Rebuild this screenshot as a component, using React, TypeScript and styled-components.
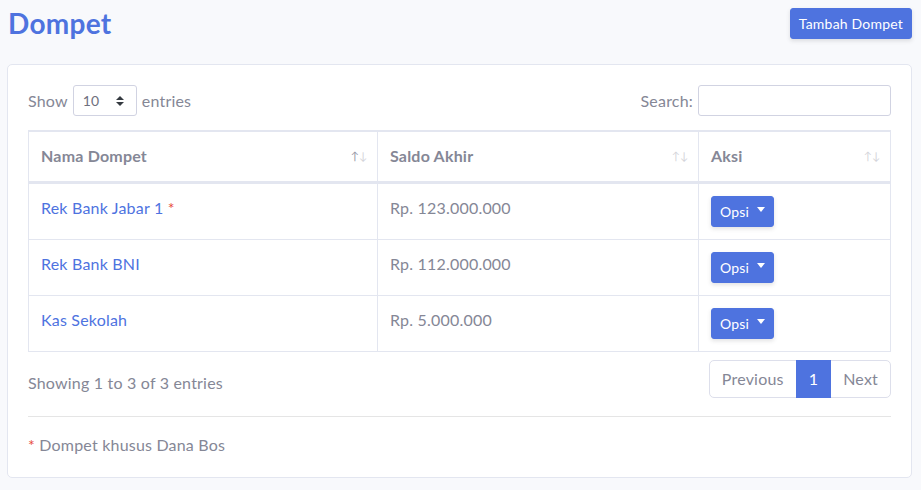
import React from "react";
import styled, { createGlobalStyle } from "styled-components";

const GlobalStyle = createGlobalStyle`
  html, body { margin: 0; padding: 0; background: #f8f9fc; }
  body {
    font-family: Lato, "Noto Sans", "Liberation Sans", sans-serif;
    font-size: 16px;
    line-height: 1.5;
    letter-spacing: 0.2px;
    color: #858796;
  }
  * { box-sizing: border-box; }
`;

const Page = styled.div`
  padding: 6px 9px 12px 7px;
`;

const HeadingRow = styled.div`
  display: flex;
  align-items: center;
  justify-content: space-between;
  margin-bottom: 24px;
  padding-left: 1px;
`;

const Title = styled.h1`
  margin: 0;
  font-size: 28px;
  line-height: 34px;
  font-weight: 700;
  letter-spacing: 0.3px;
  color: #4e73df;
`;

const PrimaryButton = styled.button`
  display: inline-flex;
  align-items: center;
  font-family: inherit;
  font-size: 14px;
  line-height: 21px;
  letter-spacing: 0.2px;
  padding: 4px 8px;
  color: #fff;
  background: #4e73df;
  border: 1px solid #4e73df;
  border-radius: 3px;
  box-shadow: 0 2px 4px rgba(58, 59, 69, 0.15);
  cursor: pointer;
`;

const Caret = styled.span`
  display: inline-block;
  margin-left: 8px;
  width: 0;
  height: 0;
  border-top: 5px solid #fff;
  border-left: 4px solid transparent;
  border-right: 4px solid transparent;
  transform: translateY(-2px);
`;

const Card = styled.div`
  background: #fff;
  border: 1px solid #e3e6f0;
  border-radius: 5px;
  padding: 20px;
`;

const Toolbar = styled.div`
  display: flex;
  justify-content: space-between;
  align-items: center;
  height: 31px;
  margin-bottom: 14px;
`;

const Label = styled.label`
  display: flex;
  align-items: center;
  gap: 5px;
  white-space: nowrap;
`;

const SelectBox = styled.div`
  position: relative;
  width: 64px;
  height: 31px;
  border: 1px solid #d1d3e2;
  border-radius: 3px;
  font-size: 14px;
  line-height: 29px;
  padding-left: 9px;
  color: #6e707e;
`;

const SelectArrow = styled.svg`
  position: absolute;
  right: 12px;
  top: 10px;
`;

const SearchInput = styled.input`
  width: 193px;
  height: 31px;
  border: 1px solid #d1d3e2;
  border-radius: 3px;
  font-family: inherit;
  font-size: 14px;
  padding: 4px 8px;
`;

const Table = styled.table`
  width: 863px;
  table-layout: fixed;
  border-collapse: separate;
  border-spacing: 0;
  border: 1px solid #e3e6f0;
`;

const Th = styled.th<{ $w: number; $last?: boolean }>`
  position: relative;
  width: ${(p) => p.$w}px;
  text-align: left;
  font-weight: 700;
  padding: 12px 30px 13px 12px;
  line-height: 24px;
  border-top: 1px solid #e3e6f0;
  border-bottom: 2px solid #e3e6f0;
  border-right: ${(p) => (p.$last ? "0" : "1px solid #e3e6f0")};
`;

const SortIcons = styled.span`
  position: absolute;
  right: 10px;
  top: 16px;
  font-size: 11px;
  font-weight: 400;
  line-height: 16px;
  letter-spacing: 0px;
`;

const Arrow = styled.span<{ $active?: boolean }>`
  opacity: ${(p) => (p.$active ? 0.85 : 0.35)};
`;

const Td = styled.td<{ $last?: boolean }>`
  vertical-align: top;
  padding: 12px;
  line-height: 24px;
  height: 56px;
  border-top: 1px solid #e3e6f0;
  border-right: ${(p) => (p.$last ? "0" : "1px solid #e3e6f0")};
`;

const Link = styled.a`
  color: #4e73df;
  text-decoration: none;
`;

const Star = styled.span`
  color: #e74a3b;
`;

const Footer = styled.div`
  display: flex;
  justify-content: space-between;
  align-items: flex-start;
  margin-top: 8px;
`;

const Info = styled.div`
  padding-top: 11px;
`;

const Pagination = styled.ul`
  display: flex;
  margin: 0 0 2px;
  padding: 0;
  list-style: none;
`;

const PageLink = styled.li<{ $active?: boolean; $pos?: "first" | "last" }>`
  padding: 8px 12px;
  line-height: 20px;
  border: 1px solid ${(p) => (p.$active ? "#4e73df" : "#dddfeb")};
  margin-left: ${(p) => (p.$pos === "first" ? "0" : "-1px")};
  background: ${(p) => (p.$active ? "#4e73df" : "#fff")};
  color: ${(p) => (p.$active ? "#fff" : "#858796")};
  position: relative;
  z-index: ${(p) => (p.$active ? 1 : 0)};
  border-radius: ${(p) =>
    p.$pos === "first" ? "5px 0 0 5px" : p.$pos === "last" ? "0 5px 5px 0" : "0"};
`;

const Divider = styled.hr`
  margin: 16px 0;
  border: 0;
  border-top: 1px solid rgba(0, 0, 0, 0.1);
`;

const Note = styled.div`
  line-height: 24px;
`;

const rows = [
  { name: "Rek Bank Jabar 1", star: true, saldo: "Rp. 123.000.000" },
  { name: "Rek Bank BNI", star: false, saldo: "Rp. 112.000.000" },
  { name: "Kas Sekolah", star: false, saldo: "Rp. 5.000.000" },
];

export default function App() {
  return (
    <>
      <GlobalStyle />
      <Page>
        <HeadingRow>
          <Title>Dompet</Title>
          <PrimaryButton>Tambah Dompet</PrimaryButton>
        </HeadingRow>
        <Card>
          <Toolbar>
            <Label>
              Show
              <SelectBox>
                10
                <SelectArrow width="8" height="10" viewBox="0 0 4 5">
                  <path fill="#343a40" d="M2 0L0 2h4zm0 5L0 3h4z" />
                </SelectArrow>
              </SelectBox>
              entries
            </Label>
            <Label>
              Search:
              <SearchInput type="search" />
            </Label>
          </Toolbar>
          <Table>
            <thead>
              <tr>
                <Th $w={349}>
                  Nama Dompet
                  <SortIcons>
                    <Arrow $active>↑</Arrow>
                    <Arrow>↓</Arrow>
                  </SortIcons>
                </Th>
                <Th $w={321}>
                  Saldo Akhir
                  <SortIcons>
                    <Arrow>↑</Arrow>
                    <Arrow>↓</Arrow>
                  </SortIcons>
                </Th>
                <Th $w={191} $last>
                  Aksi
                  <SortIcons>
                    <Arrow>↑</Arrow>
                    <Arrow>↓</Arrow>
                  </SortIcons>
                </Th>
              </tr>
            </thead>
            <tbody>
              {rows.map((r) => (
                <tr key={r.name}>
                  <Td>
                    <Link href="#">{r.name}</Link>
                    {r.star && <Star> *</Star>}
                  </Td>
                  <Td>{r.saldo}</Td>
                  <Td $last>
                    <PrimaryButton>
                      Opsi
                      <Caret />
                    </PrimaryButton>
                  </Td>
                </tr>
              ))}
            </tbody>
          </Table>
          <Footer>
            <Info>Showing 1 to 3 of 3 entries</Info>
            <Pagination>
              <PageLink $pos="first">Previous</PageLink>
              <PageLink $active>1</PageLink>
              <PageLink $pos="last">Next</PageLink>
            </Pagination>
          </Footer>
          <Divider />
          <Note>
            <Star>*</Star> Dompet khusus Dana Bos
          </Note>
        </Card>
      </Page>
    </>
  );
}
